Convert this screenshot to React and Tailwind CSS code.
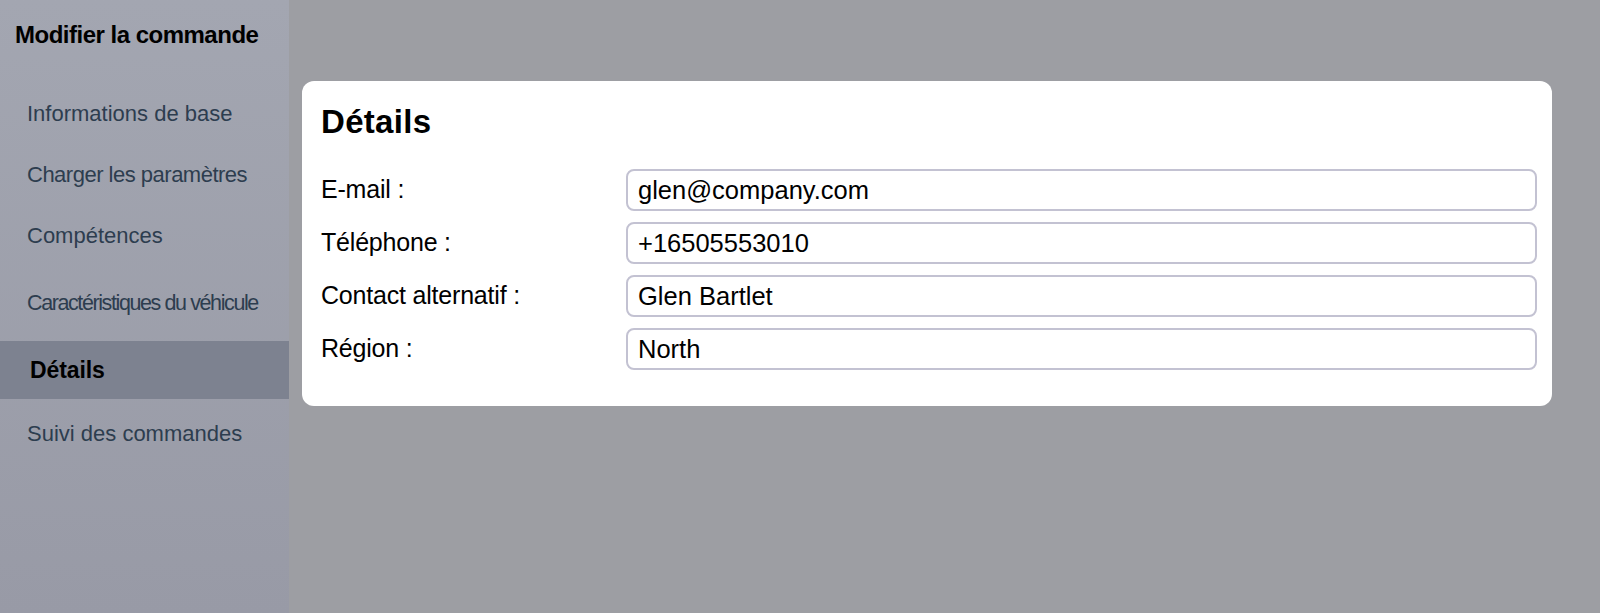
import React from "react";

const menuItems = [
  { label: "Informations de base", size: "h-[61px]", tracking: "tracking-normal" },
  { label: "Charger les paramètres", size: "h-[61px]", tracking: "tracking-[-0.5px]" },
  { label: "Compétences", size: "h-[61px]", tracking: "tracking-normal" },
  { label: "Caractéristiques du véhicule", size: "h-[75px]", condensed: true },
  { label: "Détails", active: true },
  { label: "Suivi des commandes", size: "h-[68px]", tracking: "tracking-normal" },
];

const fields = [
  { label: "E-mail :", value: "glen@company.com" },
  { label: "Téléphone :", value: "+16505553010" },
  { label: "Contact alternatif :", value: "Glen Bartlet" },
  { label: "Région :", value: "North" },
];

const Sidebar = () => {
  return (
    <aside className="w-[289px] shrink-0 min-h-[613px] bg-gradient-to-b from-[#a3a6b1] to-[#989aa6] flex flex-col">
      <h1 className="pl-[15px] pt-[18px] h-[70px] text-[24px] font-bold text-black tracking-[-0.5px] leading-[34px]">
        Modifier la commande
      </h1>
      <nav className="flex flex-col pt-[13px]">
        {menuItems.map((item, key) => (
          <div
            key={key}
            className={
              item.active
                ? "h-[58px] flex items-center pl-[30px] bg-[#7d8290] text-[23px] font-bold text-black tracking-[-0.1px]"
                : item.condensed
                ? `${item.size} flex items-center pl-[27px] text-[21.5px] text-[#2d3d4f] tracking-[-1.4px]`
                : `${item.size} ${item.tracking} flex items-center pl-[27px] text-[22px] text-[#2d3d4f]`
            }
          >
            {item.label}
          </div>
        ))}
      </nav>
    </aside>
  );
};

const DetailsCard = () => {
  return (
    <div className="bg-white rounded-[12px] pl-[19px] pr-[15px] pt-[21px] pb-[36px] flex flex-col">
      <h2 className="text-[33px] font-bold text-black leading-[40px] mb-[27px] tracking-[0.3px]">
        Détails
      </h2>
      <div className="flex flex-col gap-[11px]">
        {fields.map((field, key) => (
          <div key={key} className="flex items-center">
            <label className="w-[305px] shrink-0 text-[25px] text-black leading-[30px] -mt-[3px] tracking-[-0.2px]">
              {field.label}
            </label>
            <div className="flex-1 h-[42px] border-2 border-[#c3c2d2] rounded-[8px] flex items-center px-[10px] text-[25.5px] text-black">
              {field.value}
            </div>
          </div>
        ))}
      </div>
    </div>
  );
};

export default function App() {
  return (
    <div
      className="w-[1600px] h-[613px] flex overflow-hidden"
      style={{ fontFamily: '"Liberation Sans", Arial, sans-serif' }}
    >
      <Sidebar />
      <main className="flex-1 bg-[#9d9ea3] pt-[81px] pl-[13px] pr-[48px]">
        <DetailsCard />
      </main>
    </div>
  );
}
